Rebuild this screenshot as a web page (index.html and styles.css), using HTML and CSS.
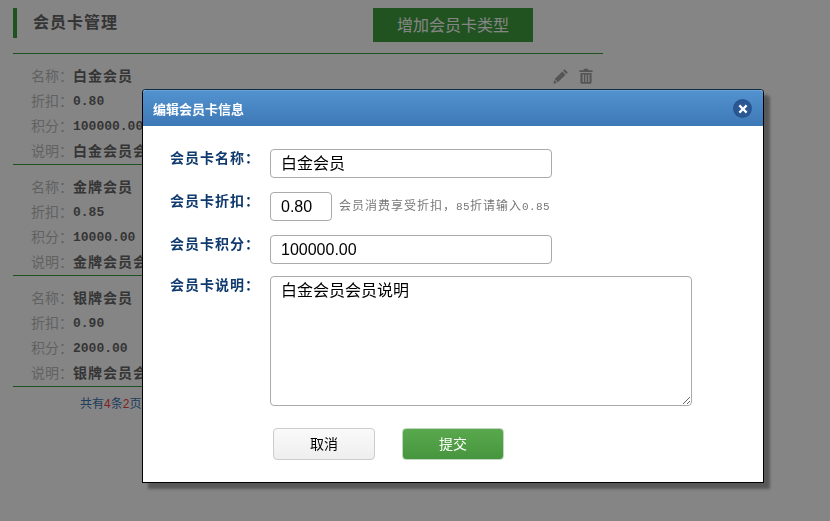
FILE: index.html
```html
<!DOCTYPE html>
<html lang="zh">
<head>
<meta charset="utf-8">
<title>会员卡管理</title>
<link rel="stylesheet" href="styles.css">
</head>
<body>
<main class="page">
  <header class="head">
    <h1 class="title">会员卡管理</h1>
    <button class="add-btn" type="button">增加会员卡类型</button>
  </header>
  <section class="card">
    <div class="actions">
      <svg class="icon" width="16" height="16" viewBox="0 0 16 16"><path d="M11.6 1.2l3.2 3.2-1.5 1.5-3.2-3.2zM9.3 3.5l3.2 3.2-7.6 7.6-3.2-3.2zM1.2 12l2.8 2.8-3.6.9z"/></svg>
      <svg class="icon" width="14" height="16" viewBox="0 0 14 16"><path d="M5 .8h4l.6 1.4H13.6v1.7H.4V2.2h4zM1.4 4.9h11.2v9.6c0 .7-.5 1.2-1.2 1.2H2.6c-.7 0-1.2-.5-1.2-1.2zM3.6 6.5v7.4h1.3V6.5zm2.8 0v7.4h1.3V6.5zm2.8 0v7.4h1.3V6.5z" fill-rule="evenodd"/></svg>
    </div>
    <div class="row"><span class="key">名称&#xFF1A;</span><b class="val">白金会员</b></div>
    <div class="row"><span class="key">折扣&#xFF1A;</span><b class="num">0.80</b></div>
    <div class="row"><span class="key">积分&#xFF1A;</span><b class="num">100000.00</b></div>
    <div class="row"><span class="key">说明&#xFF1A;</span><b class="val">白金会员会员说明</b></div>
  </section>
  <section class="card">
    <div class="row"><span class="key">名称&#xFF1A;</span><b class="val">金牌会员</b></div>
    <div class="row"><span class="key">折扣&#xFF1A;</span><b class="num">0.85</b></div>
    <div class="row"><span class="key">积分&#xFF1A;</span><b class="num">10000.00</b></div>
    <div class="row"><span class="key">说明&#xFF1A;</span><b class="val">金牌会员会员说明</b></div>
  </section>
  <section class="card">
    <div class="row"><span class="key">名称&#xFF1A;</span><b class="val">银牌会员</b></div>
    <div class="row"><span class="key">折扣&#xFF1A;</span><b class="num">0.90</b></div>
    <div class="row"><span class="key">积分&#xFF1A;</span><b class="num">2000.00</b></div>
    <div class="row"><span class="key">说明&#xFF1A;</span><b class="val">银牌会员会员说明</b></div>
  </section>
  <p class="pager">共有<em>4</em>条<em>2</em>页</p>
</main>
<div class="backdrop"></div>
<div class="modal">
  <div class="modal-head">
    <h2 class="modal-title">编辑会员卡信息</h2>
    <span class="close"><svg width="10" height="10" viewBox="0 0 10 10"><path d="M2.2.6L5 3.4 7.8.6l1.6 1.6L6.6 5l2.8 2.8-1.6 1.6L5 6.6 2.2 9.4.6 7.8 3.4 5 .6 2.2z"/></svg></span>
  </div>
  <form class="form">
    <label class="label">会员卡名称&#xFF1A;</label>
    <div class="field"><input class="input wide cjk" type="text" value="白金会员"></div>
    <label class="label">会员卡折扣&#xFF1A;</label>
    <div class="field"><input class="input short" type="text" value="0.80"><span class="hint">会员消费享受折扣&#xFF0C;<span class="hint-num">85</span>折请输入<span class="hint-num">0.85</span></span></div>
    <label class="label">会员卡积分&#xFF1A;</label>
    <div class="field tight"><input class="input wide" type="text" value="100000.00"></div>
    <label class="label">会员卡说明&#xFF1A;</label>
    <div class="field"><textarea class="input area">白金会员会员说明</textarea></div>
    <div class="buttons">
      <button class="btn cancel" type="button">取消</button>
      <button class="btn submit" type="button">提交</button>
    </div>
  </form>
</div>
</body>
</html>
```

FILE: styles.css
```css
* { box-sizing: border-box; }
html, body { height: 100%; }
body {
  margin: 0;
  overflow: hidden;
  background: #fff;
  font-family: "Noto Sans CJK SC", "Liberation Sans", sans-serif;
  font-size: 14px;
  color: #666;
}
.page { width: 590px; margin-left: 13px; padding-top: 8px; }
.head {
  display: flex;
  align-items: flex-start;
  height: 46px;
  border-bottom: 1px solid #3b9e3b;
}
.title {
  margin: 0;
  width: 360px;
  height: 30px;
  border-left: 4px solid #3b9e3b;
  padding-left: 16px;
  font-size: 16px;
  font-weight: 700;
  line-height: 27px;
  letter-spacing: 1px;
  color: #666;
}
.add-btn {
  width: 160px;
  height: 34px;
  border: 0;
  padding: 0 0 2px;
  background: #3e9f3e;
  color: #fff;
  font: 16px/30px "Noto Sans CJK SC", sans-serif;
}
.card {
  position: relative;
  padding: 8px 0 0 18px;
  height: 111px;
  border-bottom: 1px solid #3b9e3b;
}
.actions {
  position: absolute;
  top: 14px;
  right: 10px;
  display: flex;
  gap: 10px;
}
.icon { display: block; fill: #a4a4a4; }
.row { display: flex; height: 25px; align-items: center; white-space: nowrap; letter-spacing: 1px; }
.key { width: 42px; flex: none; color: #bbb; letter-spacing: 0; }
.val { color: #666; font-weight: 700; }
.num { color: #666; padding-top: 4px; font: 700 13px "Liberation Mono", monospace; letter-spacing: 0; }
.pager {
  margin: 7px 0 0 67px;
  font-size: 12px;
  line-height: 17px;
  color: #3c75b0;
}
.pager em { font: 12px "Liberation Sans", sans-serif; color: #f04040; }
.backdrop {
  position: fixed;
  inset: 0;
  background: rgba(0, 0, 0, .48);
}
.modal {
  position: fixed;
  left: 142px;
  top: 89px;
  width: 622px;
  height: 394px;
  border: 1px solid #000;
  border-top-color: #0e2a44;
  border-radius: 4px 4px 0 0;
  background: #fff;
  box-shadow: 6px 6px 3px rgba(0, 0, 0, .34);
}
.modal-head {
  display: flex;
  align-items: center;
  justify-content: space-between;
  height: 36px;
  padding: 0 11px 0 10px;
  border-radius: 3px 3px 0 0;
  background: linear-gradient(#5292cf, #3d78b6);
  border-top: 1px solid #6aa3d8;
}
.modal-title {
  margin: 0;
  font-size: 13px;
  font-weight: 700;
  color: #fff;
}
.close {
  display: flex;
  align-items: center;
  justify-content: center;
  width: 19px;
  height: 19px;
  border-radius: 50%;
  background: radial-gradient(circle, #2d5c9a, #28558f 70%, #5d8cc0);
}
.close svg { fill: #fff; display: block; }
.form {
  display: grid;
  grid-template-columns: 100px 1fr;
  padding: 23px 0 0 27px;
}
.label {
  font-size: 14px;
  font-weight: 700;
  line-height: 16px;
  letter-spacing: 1px;
  color: #0f3a6d;
  white-space: nowrap;
}
.field { display: flex; align-items: center; margin-bottom: 14px; }
.field.tight { margin-bottom: 12px; }
.input {
  display: block;
  height: 29px;
  padding: 0 10px;
  border: 1px solid #aaa;
  border-radius: 4px;
  background: #fff;
  color: #000;
  font: 16px "Liberation Sans", "Noto Sans CJK SC", sans-serif;
  outline: 0;
}
.cjk { padding-bottom: 3px; }
.wide { width: 282px; }
.short { width: 62px; }
.area { width: 422px; height: 130px; padding: 4px 10px; line-height: 20px; }
.hint { margin: 0 0 5px 7px; font-size: 12px; letter-spacing: 1px; color: #777; white-space: nowrap; }
.hint-num { font: 11px "Liberation Mono", monospace; letter-spacing: .4px; }
.buttons { grid-column: 1 / -1; display: flex; gap: 27px; margin: 8px 0 0 103px; }
.btn {
  width: 102px;
  height: 32px;
  padding: 0 0 3px;
  border-radius: 4px;
  font: 14px "Noto Sans CJK SC", sans-serif;
}
.cancel {
  border: 1px solid #ccc;
  background: linear-gradient(#fafafa, #eee);
  color: #000;
}
.submit {
  border: 1px solid #c0d8c0;
  background: linear-gradient(#5aa84d, #46963f);
  color: #fff;
}
```
